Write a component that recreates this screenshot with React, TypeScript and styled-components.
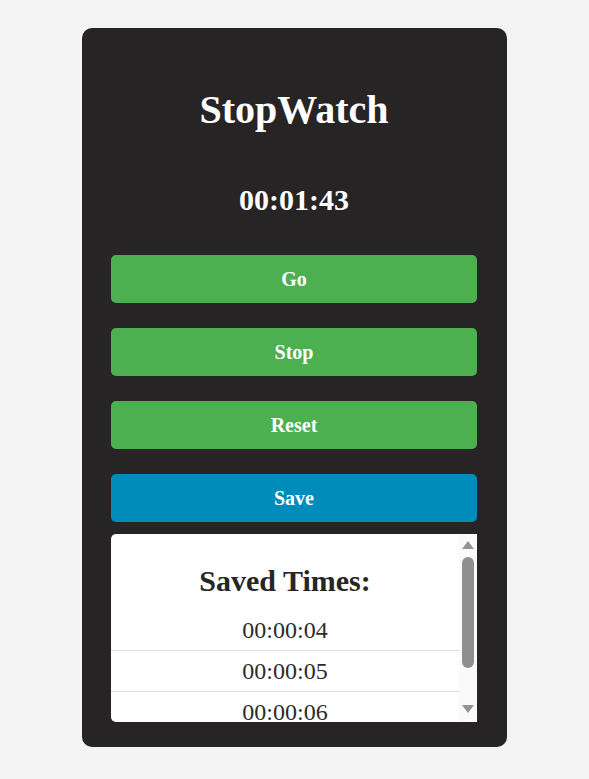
import React from 'react'
import styled, { createGlobalStyle } from 'styled-components'

const Global = createGlobalStyle`
  html, body {
    margin: 0;
    padding: 0;
    background-color: #f4f4f4;
    font-family: "Liberation Serif", "Times New Roman", serif;
  }
`

const Page = styled.div`
  display: flex;
  justify-content: center;
  padding-top: 28px;
  padding-bottom: 33px;
`

const Card = styled.div`
  width: 425px;
  box-sizing: border-box;
  padding: 59px 30px 25px 29px;
  background-color: #262425;
  border-radius: 10px;
  display: flex;
  flex-direction: column;
`

const Title = styled.h1`
  margin: 0;
  color: #ffffff;
  font-size: 40px;
  font-weight: bold;
  text-align: center;
  line-height: 46px;
`

const Time = styled.div`
  margin-top: 50px;
  color: #ffffff;
  font-size: 30px;
  font-weight: bold;
  text-align: center;
  line-height: 34px;
`

const Buttons = styled.div`
  margin-top: 38px;
  display: flex;
  flex-direction: column;
  gap: 25px;
`

const Button = styled.button<{ $blue?: boolean }>`
  height: 48px;
  width: 100%;
  border: none;
  border-radius: 5px;
  background-color: ${p => (p.$blue ? '#008cba' : '#4caf50')};
  color: #ffffff;
  font-family: "Liberation Serif", "Times New Roman", serif;
  font-size: 20px;
  font-weight: bold;
  cursor: pointer;
`

const List = styled.div`
  margin-top: 12px;
  height: 188px;
  display: flex;
  background-color: #ffffff;
  border-radius: 5px 0 0 5px;
  overflow: hidden;
`

const ListContent = styled.div`
  flex: 1;
  overflow: hidden;
`

const Scrollbar = styled.div`
  width: 18px;
  display: flex;
  flex-direction: column;
  background-color: #fafafa;
`

const Arrow = styled.div<{ $down?: boolean }>`
  height: 22px;
  display: flex;
  justify-content: center;
  align-items: ${p => (p.$down ? 'flex-start' : 'flex-end')};
  padding: ${p => (p.$down ? '5px 0 0 0' : '0 0 7px 0')};
  box-sizing: border-box;
`

const Track = styled.div`
  flex: 1;
  padding: 1px 3px 0 3px;
`

const Thumb = styled.div`
  height: 111px;
  background-color: #8f8f8f;
  border-radius: 6px;
`

const ListTitle = styled.h2`
  margin: 30px 0 12px;
  color: #262626;
  font-size: 30px;
  font-weight: bold;
  text-align: center;
  line-height: 34px;
`

const Items = styled.ul`
  list-style: none;
  margin: 0;
  padding: 0 0 20px;
`

const Item = styled.li`
  padding: 7px 0;
  border-bottom: 1px solid #dddddd;
  color: #2b2b2b;
  font-size: 24px;
  line-height: 26px;
  text-align: center;
`

const Triangle = ({ down }: { down?: boolean }) => (
  <svg width="12" height="8" viewBox="0 0 12 8">
    <polygon points={down ? '0,0 12,0 6,8' : '6,0 12,8 0,8'} fill="#939393" />
  </svg>
)

const saved = ['00:00:04', '00:00:05', '00:00:06', '00:00:07']

export default function App() {
  return (
    <>
      <Global />
      <Page>
        <Card>
          <Title>StopWatch</Title>
          <Time>00:01:43</Time>
          <Buttons>
            <Button>Go</Button>
            <Button>Stop</Button>
            <Button>Reset</Button>
            <Button $blue>Save</Button>
          </Buttons>
          <List>
            <ListContent>
              <ListTitle>Saved Times:</ListTitle>
              <Items>
                {saved.map(t => (
                  <Item key={t}>{t}</Item>
                ))}
              </Items>
            </ListContent>
            <Scrollbar>
              <Arrow>
                <Triangle />
              </Arrow>
              <Track>
                <Thumb />
              </Track>
              <Arrow $down>
                <Triangle down />
              </Arrow>
            </Scrollbar>
          </List>
        </Card>
      </Page>
    </>
  )
}
